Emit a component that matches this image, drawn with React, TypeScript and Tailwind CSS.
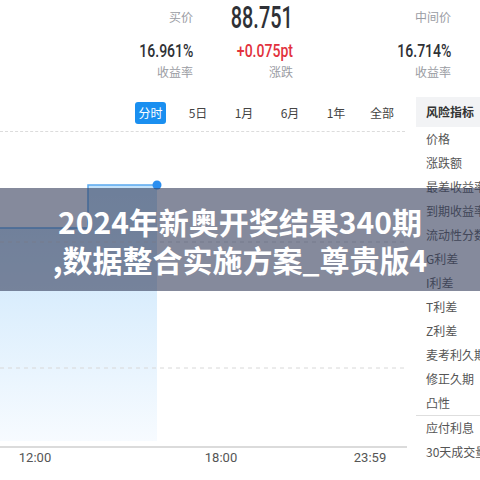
import React from 'react';

const cjk = "font-['Noto_Sans_CJK_SC','Noto_Sans',sans-serif]";
const num = "font-['Roboto','Liberation_Sans',sans-serif]";

const riskItems = [
  '价格',
  '涨跌额',
  '最差收益率',
  '到期收益率',
  '流动性分数',
  'G利差',
  'I利差',
  'T利差',
  'Z利差',
  '麦考利久期',
  '修正久期',
  '凸性',
];

const extraItems = ['应付利息', '30天成交量'];

const tabs = ['5日', '1月', '6月', '1年', '全部'];

const Stat: React.FC<{ label: string; value: string; sub: string; width: string; big?: boolean; red?: boolean }> = ({
  label,
  value,
  sub,
  width,
  big,
  red,
}) => (
  <div className={`${width} flex flex-col items-end`}>
    <div className="h-[34px] flex items-center">
      {big ? (
        <span className={`${num} inline-block origin-right scale-x-[0.64] text-[31px] font-medium leading-none text-[#2f3136]`}>
          {value}
        </span>
      ) : (
        <span className={`${cjk} text-[12px] text-[#9a9ca3]`}>{label}</span>
      )}
    </div>
    <div className="h-[33px] flex items-center">
      <span
        className={`${num} inline-block origin-right scale-x-[0.78] text-[18px] font-medium leading-none ${
          red ? 'text-[#e2323d]' : 'text-[#2f3136]'
        }`}
      >
        {big ? sub : value}
      </span>
    </div>
    <div className="h-[10px] flex items-center">
      <span className={`${cjk} text-[12px] text-[#9a9ca3]`}>{big ? label : sub}</span>
    </div>
  </div>
);

const Chart: React.FC = () => (
  <svg width="410" height="316" viewBox="0 0 410 316" className="block">
    <defs>
      <linearGradient id="fill" x1="0" y1="0" x2="0" y2="1">
        <stop offset="0%" stopColor="#c4e3fb" />
        <stop offset="100%" stopColor="#f7fbff" />
      </linearGradient>
    </defs>
    <path d="M0 96 H88 V53 H157 V309 H0 Z" fill="url(#fill)" />
    <line x1="0" y1="110" x2="405" y2="110" stroke="#d8d8d8" strokeDasharray="4 4" />
    <line x1="0" y1="236" x2="405" y2="236" stroke="#d8d8d8" strokeDasharray="4 4" />
    <path d="M0 96 H88 V53 H157" fill="none" stroke="#5aa9ef" strokeWidth="1.5" />
    <circle cx="157" cy="53" r="4.5" fill="#2a8ef0" />
    <line x1="0" y1="315" x2="407" y2="315" stroke="#cfcfcf" strokeWidth="1.5" />
  </svg>
);

export default function App() {
  return (
    <div className={`relative w-[480px] h-[480px] overflow-hidden bg-white ${cjk}`}>
      <div className="flex h-[97px]">
        <Stat width="w-[193px]" label="买价" value="16.961%" sub="收益率" />
        <Stat width="w-[100px]" label="涨跌" value="88.751" sub="+0.075pt" big red />
        <Stat width="w-[158px]" label="中间价" value="16.714%" sub="收益率" />
      </div>

      <div className="flex">
        <div className="w-[416px]">
          <div className="h-[35px] flex items-start pt-[5px] pl-[135px] border-b border-dashed border-[#dcdcdc] w-[405px]">
            <div className="w-[35px] h-[22px] rounded-[3px] bg-[#1a8ff0] text-white text-[12px] flex items-center justify-center">
              分时
            </div>
            <div className="flex ml-[9px]">
              {tabs.map((t) => (
                <div key={t} className="w-[46px] h-[22px] flex items-center justify-center text-[12px] text-[#444]">
                  {t}
                </div>
              ))}
            </div>
          </div>
          <Chart />
          <div className={`flex text-[13px] text-[#555] ${num}`}>
            <div className="w-[70px] text-center">12:00</div>
            <div className="w-[70px] ml-[116px] text-center">18:00</div>
            <div className="w-[70px] ml-[79px] text-center">23:59</div>
          </div>
        </div>

        <div className="w-[64px]">
          <div className="h-[30px] bg-[#f2f3f5] flex items-center pl-[10px] text-[12px] font-bold text-[#333] whitespace-nowrap">
            风险指标
          </div>
          {riskItems.map((item) => (
            <div key={item} className="h-[24px] flex items-center pl-[10px] text-[12px] text-[#555] whitespace-nowrap">
              {item}
            </div>
          ))}
          <div className="border-t border-[#dedede]">
            {extraItems.map((item) => (
              <div key={item} className="h-[24px] flex items-center pl-[10px] text-[12px] text-[#555] whitespace-nowrap">
                {item}
              </div>
            ))}
          </div>
        </div>
      </div>

      <div className="absolute left-0 top-[188px] w-full h-[103px] bg-[rgba(52,60,90,0.6)] flex flex-col items-center justify-center">
        <div className="text-white font-bold text-[30px] leading-[38px] whitespace-nowrap">2024年新奥开奖结果340期</div>
        <div className="text-white font-bold text-[30px] leading-[38px] whitespace-nowrap">,数据整合实施方案_尊贵版4</div>
      </div>
    </div>
  );
}
